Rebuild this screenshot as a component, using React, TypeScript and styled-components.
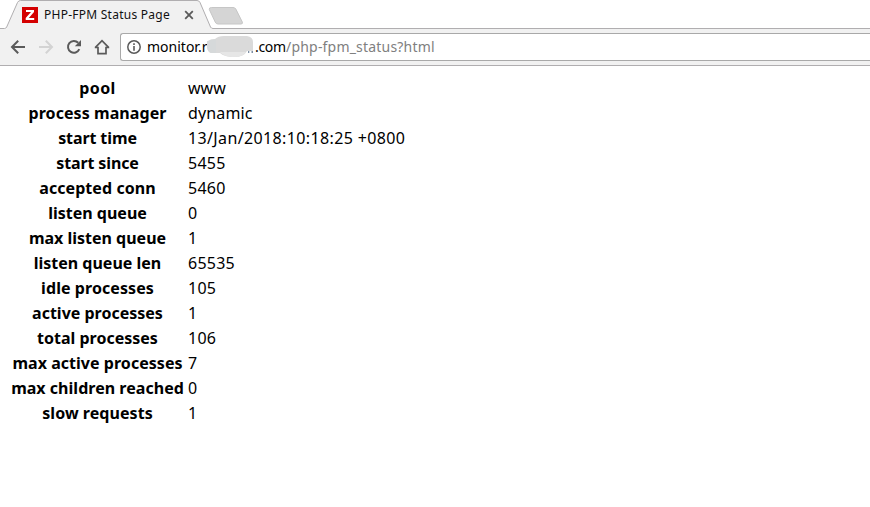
import React from "react";
import styled, { createGlobalStyle } from "styled-components";

const GlobalStyle = createGlobalStyle`
  * { box-sizing: border-box; }
  body {
    margin: 0;
    background: #fff;
    overflow: hidden;
    font-family: "Noto Sans", "Open Sans", sans-serif;
  }
`;

const Browser = styled.div`
  width: 870px;
  height: 507px;
  background: #fff;
`;

const TabStrip = styled.div`
  position: relative;
  height: 29px;
`;

const StripShapes = styled.svg`
  position: absolute;
  inset: 0;
  display: block;
`;

const Tab = styled.div`
  position: relative;
  display: flex;
  align-items: center;
  width: 206px;
  height: 29px;
  padding: 1px 0 0 22px;
`;

const Favicon = styled.svg`
  flex: none;
  margin-right: 6px;
`;

const TabTitle = styled.span`
  width: 140px;
  font-size: 12px;
  line-height: 16px;
  letter-spacing: 0.25px;
  white-space: nowrap;
  color: #111;
`;

const CloseIcon = styled.svg`
  flex: none;
`;

const Toolbar = styled.div`
  display: flex;
  align-items: center;
  height: 37px;
  padding: 0 0 1px 10px;
  background: #f1f1f1;
  border-bottom: 1px solid #b0aeb0;
`;

const NavButtons = styled.div`
  display: flex;
  gap: 12px;
  width: 110px;
`;

const NavIcon = styled.svg`
  display: block;
  flex: none;
`;

const AddressBar = styled.div`
  display: flex;
  align-items: center;
  flex: 1;
  height: 28px;
  padding-left: 6px;
  background: #fff;
  border: 1px solid #a9a9a9;
  border-right: 0;
  border-radius: 3px 0 0 3px;
`;

const Url = styled.div`
  position: relative;
  display: flex;
  margin-left: 6px;
  font-size: 14px;
  line-height: 20px;
  white-space: nowrap;
  color: #000;
`;

const UrlPart = styled.span<{ $width?: number; $spacing?: number; $muted?: boolean }>`
  width: ${(p) => (p.$width ? `${p.$width}px` : "auto")};
  letter-spacing: ${(p) => p.$spacing ?? 0}px;
  color: ${(p) => (p.$muted ? "#808080" : "#000")};
`;

const Redaction = styled.svg`
  position: absolute;
  left: 60px;
  top: -1px;
`;

const StatusTable = styled.dl`
  display: grid;
  grid-template-columns: 173px 1fr;
  grid-auto-rows: 25px;
  column-gap: 4px;
  margin: 0;
  padding: 10px 0 0 11px;
  font-size: 16px;
  line-height: 24px;
  color: #000;
`;

const Label = styled.dt<{ $spacing: number }>`
  font-weight: 700;
  text-align: center;
  white-space: nowrap;
  letter-spacing: ${(p) => p.$spacing}px;
`;

const Value = styled.dd<{ $spacing: number }>`
  margin: 0;
  white-space: nowrap;
  letter-spacing: ${(p) => p.$spacing}px;
`;

type Row = { label: string; value: string; labelSpacing?: number; valueSpacing?: number };

const rows: Row[] = [
  { label: "pool", value: "www", labelSpacing: 0.4, valueSpacing: 0 },
  { label: "process manager", value: "dynamic", labelSpacing: 0.07, valueSpacing: 0.15 },
  { label: "start time", value: "13/Jan/2018:10:18:25 +0800", labelSpacing: -0.1, valueSpacing: 0.37 },
  { label: "start since", value: "5455", labelSpacing: -0.12 },
  { label: "accepted conn", value: "5460", labelSpacing: 0.07 },
  { label: "listen queue", value: "0" },
  { label: "max listen queue", value: "1" },
  { label: "listen queue len", value: "65535" },
  { label: "idle processes", value: "105", labelSpacing: 0.07 },
  { label: "active processes", value: "1" },
  { label: "total processes", value: "106" },
  { label: "max active processes", value: "7", labelSpacing: 0.04 },
  { label: "max children reached", value: "0", labelSpacing: 0.03 },
  { label: "slow requests", value: "1", labelSpacing: 0.05 },
];

export default function App() {
  return (
    <Browser>
      <GlobalStyle />
      <TabStrip>
        <StripShapes width="870" height="29" viewBox="0 0 870 29">
          <path d="M6 29 L17.5 2.5 Q18.5 .5 20.5 .5 H197 Q199 .5 200 2.5 L211 28 V29Z" fill="#f1f1f1" />
          <path
            d="M0 28.5 H4.5 Q6 28.5 6.7 27 L17.5 2.5 Q18.5 .5 20.5 .5 H197 Q199 .5 200 2.5 L210.5 27 Q211.2 28.5 213 28.5 H870"
            fill="none"
            stroke="#b0aeb0"
          />
          <path
            d="M211.5 7.5 H233 Q235 7.5 235.8 9 L242.3 22 Q243 24 241 24 H218 Q216 24 215.2 22 L209.3 9.5 Q208.8 7.5 211.5 7.5Z"
            fill="#d5d5d5"
            stroke="#c6c6c6"
            strokeWidth="1"
          />
        </StripShapes>
        <Tab>
          <Favicon width="16" height="16" viewBox="0 0 16 16">
            <rect width="16" height="16" fill="#d40000" />
            <path d="M4 3 H12 V5 L6.8 11 H12.2 V13 H3.7 V11 L9 5 H4Z" fill="#fff" />
          </Favicon>
          <TabTitle>PHP-FPM Status Page</TabTitle>
          <CloseIcon width="10" height="10" viewBox="0 0 10 10">
            <path d="M1.2 1.2 L8.8 8.8 M8.8 1.2 L1.2 8.8" stroke="#5a5a5a" strokeWidth="1.8" />
          </CloseIcon>
        </Tab>
      </TabStrip>
      <Toolbar>
        <NavButtons>
          <NavIcon width="16" height="16" viewBox="0 0 16 16">
            <path d="M15 8 H2.5 M8.2 1.8 L2 8 L8.2 14.2" fill="none" stroke="#5a5a5a" strokeWidth="2" />
          </NavIcon>
          <NavIcon width="16" height="16" viewBox="0 0 16 16">
            <path d="M1 8 H13.5 M7.8 1.8 L14 8 L7.8 14.2" fill="none" stroke="#d3d3d3" strokeWidth="2" />
          </NavIcon>
          <NavIcon width="16" height="16" viewBox="0 0 16 16">
            <path d="M13.3 10.2 A5.9 5.9 0 1 1 12.2 3.8" fill="none" stroke="#5a5a5a" strokeWidth="2" />
            <path d="M15 1 V7.2 H8.8Z" fill="#5a5a5a" />
          </NavIcon>
          <NavIcon width="16" height="16" viewBox="0 0 16 16">
            <path d="M1.2 8.7 L8 1.7 L14.8 8.7 M0.8 8.5 H4 V14.6 H12 V8.5 H15.2" fill="none" stroke="#5a5a5a" strokeWidth="1.7" />
          </NavIcon>
        </NavButtons>
        <AddressBar>
          <NavIcon width="14" height="14" viewBox="0 0 14 14">
            <circle cx="7" cy="7" r="6.2" fill="none" stroke="#5a5a5a" strokeWidth="1.5" />
            <path d="M7 3.3 V4.9 M7 6 V10.7" stroke="#5a5a5a" strokeWidth="1.6" />
          </NavIcon>
          <Url>
            <UrlPart $width={108}>monitor.r</UrlPart>
            <UrlPart $width={31} $spacing={-0.3}>.com</UrlPart>
            <UrlPart $muted $spacing={0.2}>/php-fpm_status?html</UrlPart>
            <Redaction width="50" height="22" viewBox="0 0 50 22">
              <path
                d="M-1 6 Q3 3 8 3 Q11 0 17 0 H40 Q46 1 46 6 V15 H40 Q37 21 27 21 Q17 21 13 17 H5 Q1 17 0 11Z"
                fill="#dadada"
              />
              <path d="M0 6 Q4 3 9 3 V17 H5 Q1 17 0 11Z" fill="#d6d9da" />
              <path d="M13 16 H39 Q36 21 27 21 Q17 21 13 16Z" fill="#e6e6e6" />
              <path d="M41 16 H42.3 M44.5 16 H46" stroke="#526b88" strokeWidth="1.5" />
            </Redaction>
          </Url>
        </AddressBar>
      </Toolbar>
      <StatusTable>
        {rows.map((row) => (
          <React.Fragment key={row.label}>
            <Label $spacing={row.labelSpacing ?? 0}>{row.label}</Label>
            <Value $spacing={row.valueSpacing ?? 0.25}>{row.value}</Value>
          </React.Fragment>
        ))}
      </StatusTable>
    </Browser>
  );
}
